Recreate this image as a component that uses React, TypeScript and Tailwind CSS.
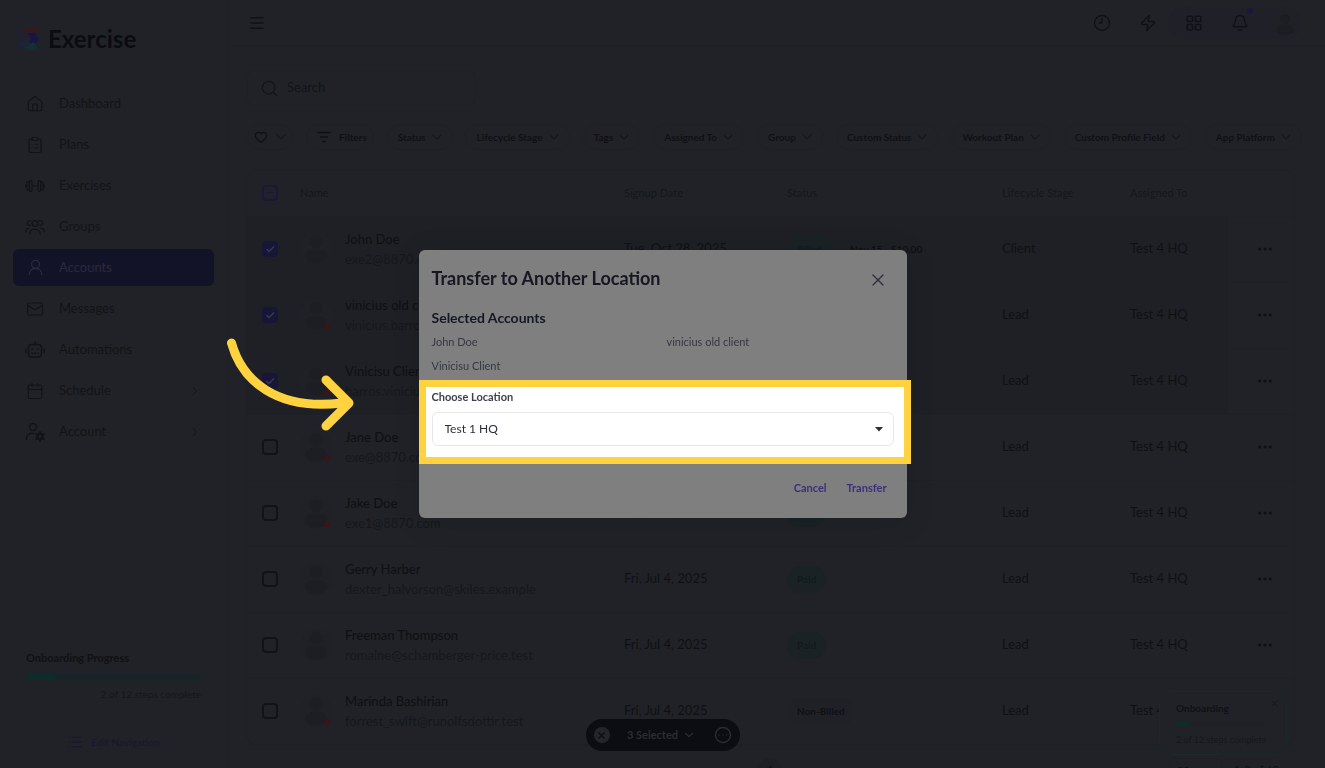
import React, { useState } from 'react';
import { X, ChevronDown, ChevronRight, Menu, Search, Heart, House, ClipboardList, UserRound, Mail, Calendar, LayoutGrid, Bell, Zap, Clock9, List, Ellipsis, CircleEllipsis } from 'lucide-react';

const accounts = [
  { name: 'John Doe', email: 'exe2@8870.com', date: 'Tue, Oct 28, 2025', status: 'Billed', note: 'Nov 15 - $10.00', stage: 'Client', selected: true, offline: false },
  { name: 'vinicius old client', email: 'vinicius.barros@8870.com', date: 'Fri, Jul 4, 2025', status: 'Paid', note: '', stage: 'Lead', selected: true, offline: true },
  { name: 'Vinicisu Client', email: 'barros.vinicius@8870.com', date: 'Fri, Jul 4, 2025', status: 'Paid', note: '', stage: 'Lead', selected: true, offline: true },
  { name: 'Jane Doe', email: 'exe@8870.com', date: 'Fri, Jul 4, 2025', status: 'Paid', note: '', stage: 'Lead', selected: false, offline: true },
  { name: 'Jake Doe', email: 'exe1@8870.com', date: 'Fri, Jul 4, 2025', status: 'Paid', note: '', stage: 'Lead', selected: false, offline: true },
  { name: 'Gerry Harber', email: 'dexter_halvorson@skiles.example', date: 'Fri, Jul 4, 2025', status: 'Paid', note: '', stage: 'Lead', selected: false, offline: false },
  { name: 'Freeman Thompson', email: 'romaine@schamberger-price.test', date: 'Fri, Jul 4, 2025', status: 'Paid', note: '', stage: 'Lead', selected: false, offline: false },
  { name: 'Marinda Bashirian', email: 'forrest_swift@runolfsdottir.test', date: 'Fri, Jul 4, 2025', status: 'Non-Billed', note: '', stage: 'Lead', selected: false, offline: true },
];

const filters = ['Status', 'Lifecycle Stage', 'Tags', 'Assigned To', 'Group', 'Custom Status', 'Workout Plan', 'Custom Profile Field', 'App Platform'];

function DumbbellIcon() {
  return (
    <svg width="20" height="20" viewBox="0 0 20 20" fill="none" stroke="currentColor" strokeWidth="1.2" strokeLinecap="round">
      <rect x="1.8" y="5.8" width="2.6" height="8.4" rx="1.3" />
      <rect x="4.4" y="4.6" width="2.6" height="10.8" rx="1.3" />
      <rect x="13" y="4.6" width="2.6" height="10.8" rx="1.3" />
      <rect x="15.6" y="5.8" width="2.6" height="8.4" rx="1.3" />
      <path d="M7 10h6M.6 9.2v1.600M19.400 9.200v1.600" />
    </svg>
  );
}

function GroupIcon() {
  return (
    <svg width="20" height="20" viewBox="0 0 20 20" fill="none" stroke="currentColor" strokeWidth="1.3" strokeLinecap="round">
      <circle cx="10" cy="6.5" r="2.900" />
      <path d="M4.800 17.200v-.6c0-2.700 2.200-4.400 5.200-4.400s5.200 1.700 5.200 4.400v.6" />
      <path d="M5.300 8.400a2.400 2.400 0 1 1 .5-4.500M14.700 8.400a2.400 2.400 0 1 0-.5-4.500" />
      <path d="M.8 15c0-2.200 1.300-3.600 3.300-3.800M19.200 15c0-2.200-1.300-3.600-3.300-3.800" />
    </svg>
  );
}

function RobotIcon() {
  return (
    <svg width="20" height="20" viewBox="0 0 20 20" fill="none" stroke="currentColor" strokeWidth="1.400" strokeLinecap="round">
      <rect x="3.500" y="4.500" width="13" height="12.500" rx="3" />
      <path d="M10 1.500v3M.8 9v3.500M19.200 9v3.500M7.300 8.800v.6M12.700 8.800v.6" />
      <path d="M6.800 13.200h.5M9.200 13.200h1.600M12.700 13.200h.5" />
    </svg>
  );
}

function AccountIcon() {
  return (
    <svg width="20" height="20" viewBox="0 0 20 20" fill="none" stroke="currentColor" strokeWidth="1.4" strokeLinecap="round">
      <circle cx="8" cy="5" r="3.4" />
      <path d="M1.5 17.5v-1c0-3 2.5-5 5.5-5h1.5" />
      <circle cx="15" cy="14.5" r="2.6" strokeWidth="2.4" />
      <path d="M15 10v1M15 18v1M11.1 12.2l.9.5M18 16.3l.9.5M11.1 16.8l.9-.5M18 12.7l.9-.5" strokeWidth="2" />
    </svg>
  );
}

function Caret() {
  return (
    <svg width="10" height="6" viewBox="0 0 10 6" fill="none" stroke="#15161b" strokeWidth="1.2" strokeLinecap="round" strokeLinejoin="round">
      <path d="M1 .8l4 4 4-4" />
    </svg>
  );
}

function Logo() {
  return (
    <svg width="24" height="24" viewBox="0 0 24 24">
      <path d="M0 1h8l5 11-5 11H0z" fill="#1f222c" />
      <path d="M5 4l7-3h11l-3 5z" fill="#35191f" />
      <path d="M5 4l15 2-6 5-4-3z" fill="#2c1c2d" />
      <path d="M11 6l8 0 4 6-5 7-7-1 4-6z" fill="#181546" />
      <path d="M6 20l12-5 5 8H12z" fill="#142e33" />
      <path d="M3 15l8-3 4 5-8 4z" fill="#1b2536" />
    </svg>
  );
}

function Avatar({ offline }: { offline?: boolean }) {
  return (
    <span className="relative flex size-8 shrink-0 items-center justify-center rounded-full bg-[#202126]">
      <svg width="24" height="30" viewBox="0 0 24 30" fill="#1d1e23">
        <circle cx="12" cy="8" r="6.5" />
        <ellipse cx="12" cy="22.500" rx="11" ry="7" />
      </svg>
      {offline && <span className="absolute right-0.5 bottom-0.5 size-1.5 rounded-full bg-[#3b1318]" />}
    </span>
  );
}

const navItems = [
  { label: 'Dashboard', icon: <House size={18} strokeWidth={1.6} /> },
  { label: 'Plans', icon: <ClipboardList size={18} strokeWidth={1.6} /> },
  { label: 'Exercises', icon: <DumbbellIcon /> },
  { label: 'Groups', icon: <GroupIcon /> },
  { label: 'Accounts', icon: <UserRound size={19} strokeWidth={1.6} /> },
  { label: 'Messages', icon: <Mail size={18} strokeWidth={1.6} /> },
  { label: 'Automations', icon: <RobotIcon /> },
  { label: 'Schedule', icon: <Calendar size={18} strokeWidth={1.6} />, more: true },
  { label: 'Account', icon: <AccountIcon />, more: true },
];

function Sidebar() {
  return (
    <aside className="flex w-[228px] shrink-0 flex-col border-r border-[#1f2025]">
      <a href="#" className="flex items-center gap-2 pt-6 pl-4 text-[24px] leading-[30px] font-bold text-[#0b0c11]">
        <Logo /> Exercise
      </a>
      <nav className="mt-[31px] flex flex-col gap-1 px-[13px]">
        {navItems.map((item) => (
          <a
            key={item.label}
            href="#"
            className={`flex h-[37px] items-center gap-3 rounded-md pr-3 pl-2.5 text-[13px] ${item.label === 'Accounts' ? 'bg-[#131328] text-[#292a3b]' : 'text-[#121318]'}`}
          >
            <span className="flex w-6 justify-center">{item.icon}</span>
            <span className="flex-1">{item.label}</span>
            {item.more && <ChevronRight size={14} strokeWidth={1.5} />}
          </a>
        ))}
      </nav>
      <div className="mt-auto px-[26px] pb-4">
        <div className="text-[11px] leading-4 font-bold text-[#101116]">Onboarding Progress</div>
        <div className="mt-2 h-1.5 overflow-hidden rounded-full bg-[#182528]">
          <div className="h-1.5 w-1/6 bg-[#0e2c29]" />
        </div>
        <div className="mt-1 text-right text-[10px] leading-5 text-[#15161b]">2 of 12 steps complete</div>
        <a href="#" className="mt-7 flex items-center justify-center gap-2 text-[10px] leading-5 font-bold text-[#191731]">
          <List size={16} /> Edit Navigation
        </a>
      </div>
    </aside>
  );
}

function TopBar() {
  return (
    <header className="flex h-[46px] shrink-0 items-center justify-between border-b border-[#1f2025] pr-6 pl-5 text-[#101116]">
      <button aria-label="Toggle menu"><Menu size={18} strokeWidth={2} /></button>
      <div className="flex items-center">
        <button aria-label="Recent" className="mr-7"><Clock9 size={18} strokeWidth={1.8} /></button>
        <button aria-label="Shortcuts" className="mr-3"><Zap size={18} strokeWidth={1.8} /></button>
        <div className="flex items-center gap-7 rounded-full bg-[#1f2028] py-1 pr-1 pl-4">
          <button aria-label="Apps"><LayoutGrid size={18} strokeWidth={2} /></button>
          <button aria-label="Notifications" className="relative">
            <Bell size={18} strokeWidth={1.8} />
            <span className="absolute -top-1.5 -right-1 size-1.5 rounded-full bg-[#1a1640]" />
          </button>
          <button aria-label="Profile" className="-ml-1 size-6 overflow-hidden rounded-full bg-[#202126]">
            <svg width="24" height="24" viewBox="0 0 24 24" fill="#1c1d22">
              <circle cx="12" cy="8" r="5" />
              <ellipse cx="12" cy="19" rx="9" ry="5.500" />
            </svg>
          </button>
        </div>
      </div>
    </header>
  );
}

function Filters() {
  const chip = 'flex h-[26px] items-center rounded-full border border-[#1f2025] pl-2.5 text-[10px] font-bold whitespace-nowrap text-[#0f1015]';
  return (
    <div className="mt-[19px] mr-[23px] ml-[19px] flex justify-between">
      <button aria-label="Favorites" className={`${chip} gap-2 pr-1.5`}>
        <Heart size={14} strokeWidth={2.2} className="-ml-1" /> <Caret />
      </button>
      <button className={`${chip} gap-2 pr-1.5`}>
        <svg width="14" height="12" viewBox="0 0 14 12" stroke="currentColor" strokeWidth="1.5" strokeLinecap="round">
          <path d="M1 1.500h12M3.500 6h7M5.800 10.500h2.400" />
        </svg>
        Filters
      </button>
      {filters.map((filter) => (
        <button key={filter} className={`${chip} gap-1.5 pr-2.5`}>
          {filter} <Caret />
        </button>
      ))}
    </div>
  );
}

function RowCheckbox({ checked, label, onChange }: { checked: boolean; label: string; onChange: () => void }) {
  return (
    <span className="relative ml-[15px] flex size-4">
      <input
        type="checkbox"
        aria-label={label}
        checked={checked}
        onChange={onChange}
        className="size-4 appearance-none rounded-[4px] border-2 border-[#121318] checked:border-[#171638] checked:bg-[#171638]"
      />
      {checked && (
        <svg className="pointer-events-none absolute inset-0" width="16" height="16" viewBox="0 0 16 16" fill="none" stroke="#3a3b4c" strokeWidth="1.3">
          <path d="M4.500 8l2.500 2.500 5-5" />
        </svg>
      )}
    </span>
  );
}

function AccountsTable() {
  const [selected, setSelected] = useState(accounts.map((a) => a.selected));

  const toggle = (index: number) => {
    setSelected(selected.map((value, i) => (i === index ? !value : value)));
  };

  return (
    <div className="mt-[19px] mr-[30px] ml-[18px] rounded-xl border border-[#1f2025]">
      <table className="w-full table-fixed border-collapse text-left">
        <colgroup>
          <col className="w-[53px]" />
          <col />
          <col className="w-[163px]" />
          <col className="w-[215px]" />
          <col className="w-[128px]" />
          <col className="w-[98px]" />
          <col className="w-[66px]" />
        </colgroup>
        <thead>
          <tr className="h-[46px] border-b border-[#1f2025] text-[11px] text-[#14171d]">
            <th>
              <button aria-label="Clear selection" className="ml-[15px] flex size-4 items-center justify-center rounded-[4px] border-2 border-[#1a1838]">
                <span className="h-px w-2 bg-[#1a1838]" />
              </button>
            </th>
            <th className="font-medium">Name</th>
            <th className="font-medium">Signup Date</th>
            <th className="font-medium">Status</th>
            <th className="font-medium">Lifecycle Stage</th>
            <th className="font-medium">Assigned To</th>
            <th aria-label="Actions" />
          </tr>
        </thead>
        <tbody>
          {accounts.map((account, index) => (
            <tr key={account.email} className="h-[66px] border-b border-[#1f2025] text-[13px] text-[#0f1015]">
              <td className={selected[index] ? 'bg-[#1f2025]' : ''}>
                <RowCheckbox checked={selected[index]} label={`Select ${account.name}`} onChange={() => toggle(index)} />
              </td>
              <td className={selected[index] ? 'bg-[#1f2025]' : ''}>
                <div className="flex items-center gap-[13px]">
                  <Avatar offline={account.offline} />
                  <div className="leading-5">
                    <div className="font-medium">{account.name}</div>
                    <div className="text-[#15171c]">{account.email}</div>
                  </div>
                </div>
              </td>
              <td className={selected[index] ? 'bg-[#1f2025]' : ''}>{account.date}</td>
              <td className={selected[index] ? 'bg-[#1f2025]' : ''}>
                <div className="flex gap-2 text-[10px] font-bold">
                  <span className={`rounded-full px-2.5 py-1.5 ${account.status === 'Non-Billed' ? 'bg-[#202126] text-[#0f1015]' : 'bg-[#1a2226] text-[#101b1e]'}`}>
                    {account.status}
                  </span>
                  {account.note && <span className="rounded-full bg-[#1e2025] px-2.5 py-1.5">{account.note}</span>}
                </div>
              </td>
              <td className={selected[index] ? 'bg-[#1f2025]' : ''}>{account.stage}</td>
              <td className={selected[index] ? 'bg-[#1f2025]' : ''}>Test 4 HQ</td>
              <td>
                <button aria-label={`Actions for ${account.name}`} className="mx-auto block pl-2"><Ellipsis size={18} /></button>
              </td>
            </tr>
          ))}
        </tbody>
      </table>
    </div>
  );
}

function Pagination() {
  return (
    <footer className="mt-3 mr-[30px] ml-[18px] grid grid-cols-3 items-center text-[11px] leading-6 text-[#0f1015]">
      <button className="col-start-2 mx-auto size-6 rounded-full bg-[#1e1f24]">1</button>
      <div className="flex justify-end gap-3 pr-4">
        <select aria-label="Rows per page" className="h-6 w-[54px] appearance-none rounded-md border border-[#1f2025] px-2">
          <option>20</option>
        </select>
        <span>1-8 of 60</span>
      </div>
    </footer>
  );
}

function TransferModal() {
  const [location, setLocation] = useState('Test 1 HQ');

  return (
    <div className="fixed inset-0 flex items-center justify-center">
      <div role="dialog" aria-labelledby="transfer-title" className="relative w-[488px] rounded-md bg-[#7f7f7f] shadow-[0_4px_30px_rgba(0,0,0,0.1)]">
        <div className="flex items-center justify-between px-[13px] pt-3">
          <h2 id="transfer-title" className="text-[18px] leading-8 font-bold text-[#151722]">Transfer to Another Location</h2>
          <button aria-label="Close" className="mt-1 mr-1.5 text-[#2b2d36]"><X size={20} strokeWidth={1.5} /></button>
        </div>
        <h3 className="px-[13px] pt-3 text-[14px] leading-6 font-bold text-[#151722]">Selected Accounts</h3>
        <ul className="grid grid-cols-2 gap-x-2 px-[13px] text-[11px] leading-6 text-[#363842]">
          <li>John Doe</li>
          <li>vinicius old client</li>
          <li>Vinicisu Client</li>
        </ul>
        {/* Highlighted step, overhangs the dialog on the right */}
        <div className="mt-0.5 -mr-1 flex h-[84px] flex-col border-[7px] border-[#ffd23f] bg-white pr-2.5 pl-1.5">
          <label htmlFor="location" className="text-[11px] leading-5 font-bold text-[#3d3f4d]">Choose Location</label>
          <div className="relative mt-[5px]">
            <select
              id="location"
              value={location}
              onChange={(e) => setLocation(e.target.value)}
              className="h-[34px] w-full appearance-none rounded-md border border-[#e6e7ea] bg-white px-3 text-[12px] text-[#2b2e3b]"
            >
              <option>Test 1 HQ</option>
              <option>Test 4 HQ</option>
            </select>
            <svg className="pointer-events-none absolute top-[15px] right-[11px]" width="8" height="5" viewBox="0 0 8 5" fill="#2b2e3b">
              <path d="M0 0h8L4 4.500z" />
            </svg>
          </div>
        </div>
        <div className="flex justify-end gap-5 px-5 pt-3.5 pb-5 text-[11px] leading-5 font-bold text-[#3b2f7d]">
          <button>Cancel</button>
          <button>Transfer</button>
        </div>
        {/* Pointer arrow */}
        <svg className="pointer-events-none absolute top-[84px] -left-[195px]" width="132" height="100" viewBox="0 0 132 100" fill="none" stroke="#ffd23f" strokeWidth="9" strokeLinecap="round" strokeLinejoin="round">
          <path d="M7.500 9C18 47 53 77 118 69" />
          <path d="M102 46l23 23-23 23" />
        </svg>
      </div>
    </div>
  );
}

export default function App() {
  return (
    <div className="flex h-screen overflow-hidden bg-[#212227] font-['Lato',sans-serif]">
      <Sidebar />
      <main className="flex min-w-0 flex-1 flex-col">
        <TopBar />
        <label className="mt-[25px] ml-[19px] flex h-[34px] w-[229px] shrink-0 items-center gap-2 rounded-md border border-[#1f2025] px-3 text-[#121419]">
          <Search size={19} strokeWidth={1.5} className="shrink-0" />
          <input type="search" aria-label="Search" placeholder="Search" className="w-full min-w-0 bg-transparent text-[13px] outline-none placeholder:text-[#121419]" />
        </label>
        <Filters />
        <AccountsTable />
        <Pagination />
      </main>

      {/* Selection toolbar */}
      <div className="fixed inset-x-0 bottom-[17px] flex justify-center">
        <div className="flex h-8 w-[154px] items-center justify-between rounded-full bg-[#0c0d12] px-2 text-[11px] font-bold text-[#2b2c31]">
          <button aria-label="Clear selected" className="flex size-4 items-center justify-center rounded-full bg-[#24252a] text-[#0c0d12]"><X size={11} strokeWidth={2.5} /></button>
          <button className="flex items-center gap-1">3 Selected <ChevronDown size={14} /></button>
          <button aria-label="More actions"><CircleEllipsis size={18} strokeWidth={1.8} /></button>
        </div>
      </div>

      {/* Onboarding card */}
      <div className="fixed right-[38px] bottom-[13px] w-32 rounded-xl border border-[#19292c] bg-[#212227] px-4 pt-2 pb-1">
        <div className="text-[10px] leading-4 font-bold text-[#101116]">Onboarding</div>
        <button aria-label="Dismiss onboarding" className="absolute top-1.5 right-1.5 text-[#15161b]"><X size={11} /></button>
        <div className="mt-1.5 h-1 w-[88px] bg-[#1f2025]">
          <div className="h-1 w-1/6 bg-[#0e2c29]" />
        </div>
        <div className="mt-1 text-[9px] leading-5 whitespace-nowrap text-[#15161b]">2 of 12 steps complete</div>
      </div>
      <TransferModal />
    </div>
  );
}
